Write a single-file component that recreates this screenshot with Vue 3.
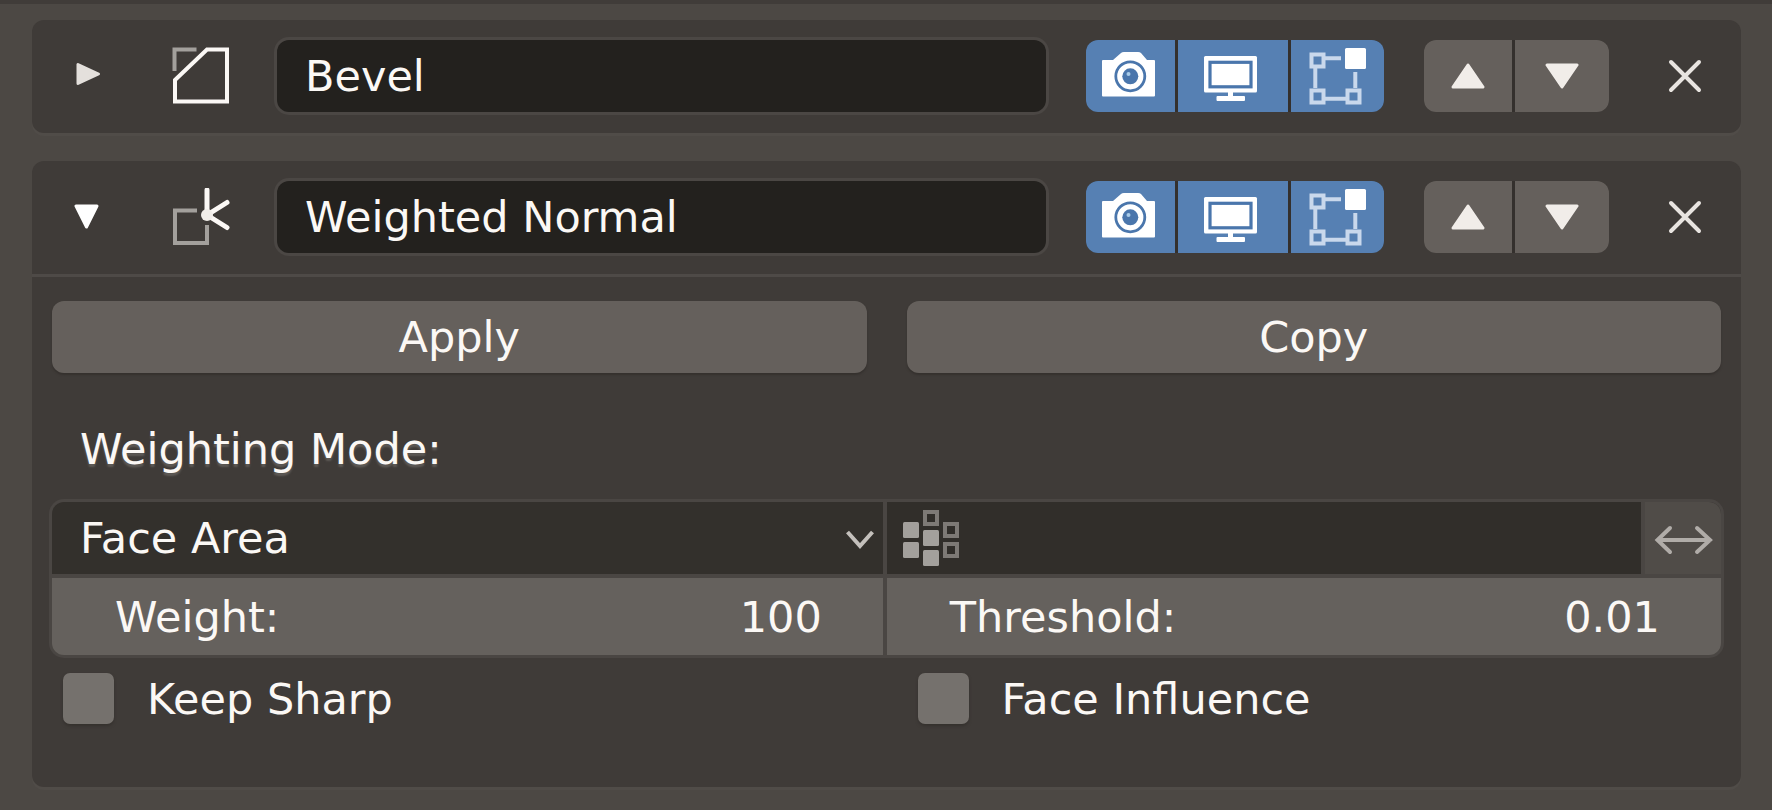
<script setup>
import { reactive, ref } from "vue";

const modifiers = reactive([
  { id: "bevel", name: "Bevel", open: false },
  { id: "weighted-normal", name: "Weighted Normal", open: true },
]);

const modes = ["Face Area", "Corner Angle", "Face Area & Angle"];

const mode = ref("Face Area");
const vertexGroup = ref("");
const weight = ref("100");
const threshold = ref("0.01");
const keepSharp = ref(false);
const faceInfluence = ref(false);
</script>

<template>
  <main class="properties">
    <section v-for="modifier in modifiers" :key="modifier.id" class="panel">
      <header class="panel-header">
        <button
          class="plain"
          type="button"
          aria-label="Expand"
          :aria-expanded="modifier.open"
          @click="modifier.open = !modifier.open"
        >
          <svg class="triangle" width="28" height="28" viewBox="0 0 28 28">
            <path v-if="modifier.open" class="is-open" d="M2 3H23L12.5 24Z" />
            <path v-else d="M4 2.5V21.500L24.500 12Z" />
          </svg>
        </button>

        <div class="type-icon">
          <svg v-if="modifier.id === 'bevel'" width="58" height="58" viewBox="0 0 58 58">
            <path class="dim" d="M2.5 24V2.5H24.500" />
            <path class="bright" d="M3 33L35 2.500H55V54.500H3Z" />
          </svg>
          <svg v-else width="58" height="58" viewBox="0 0 58 58">
            <path class="dim" d="M25 22.500H3V55H35V37" />
            <path class="bright round" d="M35 2V27L55 14.500M35 27L55 39.500" />
            <circle cx="35" cy="27" r="6" fill="#f1ede9" />
          </svg>
        </div>

        <input v-model="modifier.name" class="name" type="text" aria-label="Modifier name" />

        <div class="group">
          <button class="toggle render" type="button" aria-label="Render" aria-pressed="true">
            <svg width="89" height="72" viewBox="0 0 89 72">
              <path
                fill="#fff"
                d="M17 20H27L35 13Q36 12 38 12H52Q54 12 55 13L61 20H68Q69 20 69 21V55.500Q69 56.500 68 56.500H17Q16 56.500 16 55.500V21Q16 20 17 20Z"
              />
              <circle cx="44.300" cy="36.300" r="14.500" fill="none" stroke="#4a76ac" stroke-width="2.800" />
              <circle cx="44.300" cy="36.300" r="8" fill="#4a76ac" />
              <circle cx="42.500" cy="34" r="2" fill="#a9cbe8" />
            </svg>
          </button>
          <button class="toggle viewport" type="button" aria-label="Viewport" aria-pressed="true">
            <svg width="110" height="72" viewBox="0 0 110 72">
              <rect x="26" y="16" width="53" height="36.500" rx="1.500" fill="#fff" />
              <rect x="32" y="22.300" width="41" height="24.500" fill="#fff" stroke="#4a76ac" stroke-width="3.200" />
              <path fill="#fff" d="M50 52H55V56H66Q67 56 67 57V60Q67 61 66 61H39.500Q38.500 61 38.500 60V57Q38.500 56 39.500 56H50Z" />
            </svg>
          </button>
          <button class="toggle edit" type="button" aria-label="Edit mode" aria-pressed="true">
            <svg width="93" height="72" viewBox="0 0 93 72">
              <g fill="none" stroke="#c9d8ec" stroke-width="4">
                <path d="M34 18.300H50M24.300 28V48M34 58.700H55M64.300 32V48" />
                <path d="M20.500 14.500H32.500V26.500H20.500ZM20.500 50.500H32.500V62.500H20.500ZM56.500 50.500H68.500V62.500H56.500Z" />
              </g>
              <rect x="54" y="8" width="21" height="21" rx="1.500" fill="#fff" />
            </svg>
          </button>
        </div>

        <div class="group">
          <button class="move up" type="button" aria-label="Move up">
            <svg class="triangle" width="34" height="26" viewBox="0 0 34 26">
              <path d="M17 2L32 24H2Z" />
            </svg>
          </button>
          <button class="move down" type="button" aria-label="Move down">
            <svg class="triangle" width="34" height="26" viewBox="0 0 34 26">
              <path d="M17 24L32 2H2Z" />
            </svg>
          </button>
        </div>

        <button class="plain" type="button" aria-label="Remove">
          <svg class="cross" width="34" height="34" viewBox="0 0 34 34">
            <path d="M3 3L31 31M31 3L3 31" />
          </svg>
        </button>
      </header>

      <div v-if="modifier.open" class="panel-body">
        <div class="columns">
          <button class="action" type="button">Apply</button>
          <button class="action" type="button">Copy</button>
        </div>

        <label class="mode-label" for="mode">Weighting Mode:</label>

        <div class="fields">
          <div class="select">
            <select id="mode" v-model="mode">
              <option v-for="item in modes" :key="item">{{ item }}</option>
            </select>
            <svg class="chevron" width="30" height="20" viewBox="0 0 30 20">
              <path d="M2.500 2L15 16L27.500 2" />
            </svg>
          </div>

          <div class="vertex-group">
            <label class="vertex-label" for="vertex-group" aria-label="Vertex group">
              <svg width="76" height="72" viewBox="0 0 76 72">
                <g fill="#a3a09c">
                  <rect x="16" y="20" width="16" height="16" rx="1.500" />
                  <rect x="16" y="40" width="16" height="16" rx="1.500" />
                  <rect x="36" y="28" width="16" height="16" rx="1.500" />
                  <rect x="36" y="48" width="16" height="16" rx="1.500" />
                </g>
                <g fill="none" stroke="#7e7a76" stroke-width="4">
                  <rect x="38" y="10" width="12" height="12" />
                  <rect x="58" y="22" width="12" height="12" />
                  <rect x="58" y="42" width="12" height="12" />
                </g>
              </svg>
            </label>
            <input id="vertex-group" v-model="vertexGroup" type="text" />
            <button class="invert" type="button" aria-label="Invert">
              <svg width="76" height="72" viewBox="0 0 76 72">
                <path d="M13 38H65M25 26L12.500 38L25 50M52 26L65 38L52 50" />
              </svg>
            </button>
          </div>

          <label class="number">
            <span>Weight:</span>
            <input v-model="weight" type="text" inputmode="numeric" />
          </label>
          <label class="number">
            <span>Threshold:</span>
            <input v-model="threshold" type="text" inputmode="decimal" />
          </label>
        </div>

        <div class="columns checks">
          <label class="check">
            <input v-model="keepSharp" type="checkbox" />
            <span>Keep Sharp</span>
          </label>
          <label class="check">
            <input v-model="faceInfluence" type="checkbox" />
            <span>Face Influence</span>
          </label>
        </div>
      </div>
    </section>
  </main>
</template>

<style>
body {
  margin: 0;
  background: #4c4844;
}
</style>

<style scoped>
.properties {
  box-sizing: border-box;
  min-height: 100vh;
  padding: 16px 31px 22px 32px;
  border-top: 4px solid #403c39;
  display: flex;
  flex-direction: column;
  gap: 28px;
  color: #fbf8f5;
  font-family: "DejaVu Sans", sans-serif;
  font-size: 43px;
  line-height: 52px;
}

.properties * {
  box-sizing: border-box;
}

button,
input,
select {
  margin: 0;
  padding: 0;
  border: 0;
  border-radius: 0;
  outline: 0;
  color: inherit;
  font: inherit;
  background: none;
  appearance: none;
}

button,
select,
.check {
  cursor: pointer;
}

button:focus-visible,
input:focus-visible,
select:focus-visible {
  outline: 3px solid #5680b3;
}

svg {
  display: block;
  flex: none;
}

.panel {
  border-radius: 12px;
  background: #3f3b38;
  box-shadow: 0 3px 0 #504c48;
}

.panel-header {
  display: flex;
  align-items: center;
  padding: 20px 20px 21px;
}

.plain {
  display: flex;
  flex: none;
  align-items: center;
  justify-content: center;
  width: 72px;
  height: 72px;
}

.triangle {
  fill: #f1ede9;
  stroke: #f1ede9;
  stroke-width: 3;
  stroke-linejoin: round;
}

.plain .triangle {
  fill: #e4e0dc;
  stroke: #e4e0dc;
}

.plain .is-open {
  fill: #fff;
  stroke: #fff;
}

.type-icon {
  display: flex;
  flex: none;
  justify-content: center;
  width: 153px;
}

.dim,
.bright {
  fill: none;
  stroke: #a3a09c;
  stroke-width: 4;
}

.bright {
  stroke: #fbf8f5;
}

.round {
  stroke-width: 5;
  stroke-linecap: round;
}

.name {
  flex: 1;
  min-width: 0;
  height: 72px;
  padding: 0 28px;
  border-radius: 12px;
  background: #23211e;
  box-shadow: 0 0 0 3px #4b4744;
}

.group {
  display: flex;
  flex: none;
  gap: 3px;
  height: 72px;
  margin-left: 40px;
  border-radius: 12px;
  overflow: hidden;
  background: #34302d;
}

.group + .plain {
  margin-left: 40px;
}

.toggle {
  background: #5680b3;
}

.render {
  width: 89px;
}

.viewport {
  width: 110px;
}

.edit {
  width: 93px;
}

.move {
  display: flex;
  align-items: center;
  justify-content: center;
  background: #65605c;
}

.up {
  width: 88px;
}

.down {
  width: 94px;
}

.cross {
  fill: none;
  stroke: #e8e4e0;
  stroke-width: 4;
  stroke-linecap: round;
}

.panel-body {
  padding: 24px 20px 63px;
  border-top: 3px solid #4e4a47;
}

.columns {
  display: grid;
  grid-template-columns: 1fr 1fr;
  gap: 40px;
}

.action {
  height: 72px;
  border-radius: 12px;
  background: #65605c;
  box-shadow: 0 2px 2px #35312e;
}

.mode-label {
  display: block;
  margin: 50px 28px 27px;
  text-shadow: 0 3px 2px #5e5a56;
}

.fields {
  display: grid;
  grid-template-columns: 499fr 501fr;
  gap: 4px;
  border-radius: 12px;
  overflow: hidden;
  background: #4a4643;
  box-shadow: 0 0 0 3px #4a4643;
}

.select {
  position: relative;
  height: 72px;
  background: #33302c;
}

.select select {
  width: 100%;
  height: 100%;
  padding: 0 48px 0 28px;
}

.chevron {
  position: absolute;
  top: 28px;
  right: 8px;
  fill: none;
  stroke: #c4c0bc;
  stroke-width: 4;
  pointer-events: none;
}

.vertex-group {
  display: flex;
  height: 72px;
  min-width: 0;
  background: #312e2a;
}

.vertex-group input {
  flex: 1;
  min-width: 0;
}

.invert {
  width: 80px;
  border-left: 4px solid #4a4643;
  background: #504c48;
}

.invert svg {
  fill: none;
  stroke: #b0aca8;
  stroke-width: 4;
  stroke-linecap: round;
}

.number {
  display: flex;
  align-items: center;
  min-width: 0;
  height: 77px;
  padding: 0 61px 0 63px;
  background: #65615d;
}

.number input {
  flex: 1;
  min-width: 0;
  text-align: right;
}

.checks {
  margin-top: 18px;
}

.check {
  display: flex;
  align-items: center;
  gap: 33px;
  height: 51px;
  margin-left: 11px;
}

.check input {
  flex: none;
  width: 51px;
  height: 51px;
  border-radius: 7px;
  background: #75716d;
  box-shadow: 0 2px 3px #35312e;
}

.check input:checked {
  background: #5680b3;
}
</style>
